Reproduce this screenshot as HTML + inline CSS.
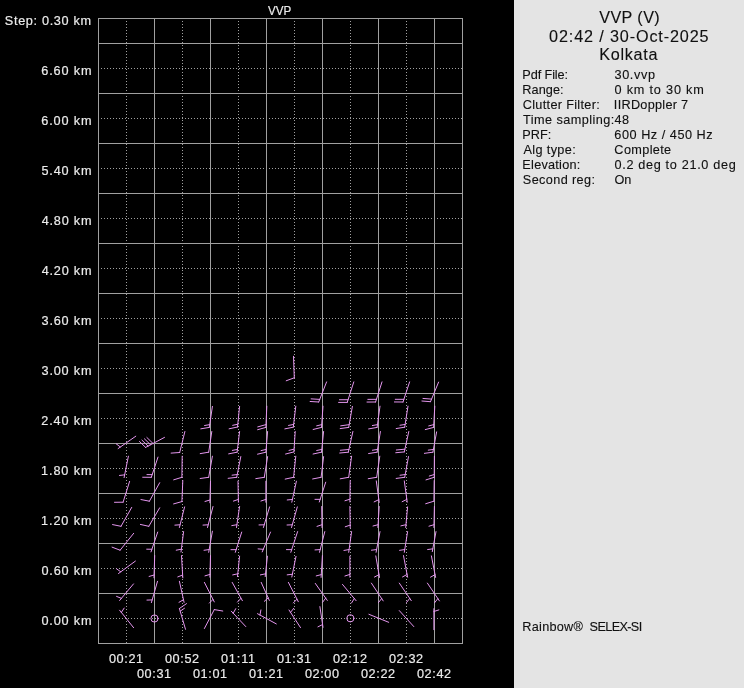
<!DOCTYPE html>
<html><head><meta charset="utf-8"><style>html,body{margin:0;padding:0;background:#000;width:744px;height:688px;overflow:hidden}</style></head>
<body><svg width="744" height="688" viewBox="0 0 744 688" style="display:block"><rect x="0" y="0" width="744" height="688" fill="#000"/><rect x="514" y="0" width="230" height="688" fill="#e4e4e4"/><line x1="98" y1="18.5" x2="463" y2="18.5" stroke="#a0a0a0" stroke-width="1"/><line x1="98" y1="43.5" x2="463" y2="43.5" stroke="#a0a0a0" stroke-width="1"/><line x1="101" y1="68.5" x2="462" y2="68.5" stroke="#a0a0a0" stroke-width="1" stroke-dasharray="1 2"/><line x1="98" y1="93.5" x2="463" y2="93.5" stroke="#a0a0a0" stroke-width="1"/><line x1="101" y1="118.5" x2="462" y2="118.5" stroke="#a0a0a0" stroke-width="1" stroke-dasharray="1 2"/><line x1="98" y1="143.5" x2="463" y2="143.5" stroke="#a0a0a0" stroke-width="1"/><line x1="101" y1="168.5" x2="462" y2="168.5" stroke="#a0a0a0" stroke-width="1" stroke-dasharray="1 2"/><line x1="98" y1="193.5" x2="463" y2="193.5" stroke="#a0a0a0" stroke-width="1"/><line x1="101" y1="218.5" x2="462" y2="218.5" stroke="#a0a0a0" stroke-width="1" stroke-dasharray="1 2"/><line x1="98" y1="243.5" x2="463" y2="243.5" stroke="#a0a0a0" stroke-width="1"/><line x1="101" y1="268.5" x2="462" y2="268.5" stroke="#a0a0a0" stroke-width="1" stroke-dasharray="1 2"/><line x1="98" y1="293.5" x2="463" y2="293.5" stroke="#a0a0a0" stroke-width="1"/><line x1="101" y1="318.5" x2="462" y2="318.5" stroke="#a0a0a0" stroke-width="1" stroke-dasharray="1 2"/><line x1="98" y1="343.5" x2="463" y2="343.5" stroke="#a0a0a0" stroke-width="1"/><line x1="101" y1="368.5" x2="462" y2="368.5" stroke="#a0a0a0" stroke-width="1" stroke-dasharray="1 2"/><line x1="98" y1="393.5" x2="463" y2="393.5" stroke="#a0a0a0" stroke-width="1"/><line x1="101" y1="418.5" x2="462" y2="418.5" stroke="#a0a0a0" stroke-width="1" stroke-dasharray="1 2"/><line x1="98" y1="443.5" x2="463" y2="443.5" stroke="#a0a0a0" stroke-width="1"/><line x1="101" y1="468.5" x2="462" y2="468.5" stroke="#a0a0a0" stroke-width="1" stroke-dasharray="1 2"/><line x1="98" y1="493.5" x2="463" y2="493.5" stroke="#a0a0a0" stroke-width="1"/><line x1="101" y1="518.5" x2="462" y2="518.5" stroke="#a0a0a0" stroke-width="1" stroke-dasharray="1 2"/><line x1="98" y1="543.5" x2="463" y2="543.5" stroke="#a0a0a0" stroke-width="1"/><line x1="101" y1="568.5" x2="462" y2="568.5" stroke="#a0a0a0" stroke-width="1" stroke-dasharray="1 2"/><line x1="98" y1="593.5" x2="463" y2="593.5" stroke="#a0a0a0" stroke-width="1"/><line x1="101" y1="618.5" x2="462" y2="618.5" stroke="#a0a0a0" stroke-width="1" stroke-dasharray="1 2"/><line x1="98" y1="643.5" x2="463" y2="643.5" stroke="#a0a0a0" stroke-width="1"/><line x1="98.5" y1="18" x2="98.5" y2="644" stroke="#a0a0a0" stroke-width="1"/><line x1="126.5" y1="21" x2="126.5" y2="643" stroke="#a0a0a0" stroke-width="1" stroke-dasharray="1 2"/><line x1="154.5" y1="18" x2="154.5" y2="644" stroke="#a0a0a0" stroke-width="1"/><line x1="182.5" y1="21" x2="182.5" y2="643" stroke="#a0a0a0" stroke-width="1" stroke-dasharray="1 2"/><line x1="210.5" y1="18" x2="210.5" y2="644" stroke="#a0a0a0" stroke-width="1"/><line x1="238.5" y1="21" x2="238.5" y2="643" stroke="#a0a0a0" stroke-width="1" stroke-dasharray="1 2"/><line x1="266.5" y1="18" x2="266.5" y2="644" stroke="#a0a0a0" stroke-width="1"/><line x1="294.5" y1="21" x2="294.5" y2="643" stroke="#a0a0a0" stroke-width="1" stroke-dasharray="1 2"/><line x1="322.5" y1="18" x2="322.5" y2="644" stroke="#a0a0a0" stroke-width="1"/><line x1="350.5" y1="21" x2="350.5" y2="643" stroke="#a0a0a0" stroke-width="1" stroke-dasharray="1 2"/><line x1="378.5" y1="18" x2="378.5" y2="644" stroke="#a0a0a0" stroke-width="1"/><line x1="406.5" y1="21" x2="406.5" y2="643" stroke="#a0a0a0" stroke-width="1" stroke-dasharray="1 2"/><line x1="434.5" y1="18" x2="434.5" y2="644" stroke="#a0a0a0" stroke-width="1"/><line x1="462.5" y1="18" x2="462.5" y2="644" stroke="#a0a0a0" stroke-width="1"/><g fill="none" stroke="#e496ee" stroke-width="1" stroke-linecap="round"><path d="M133.6 627.7L119.6 610.2M121.35 612.39l2.86 -4.34"/><path d="M133.5 583.9L119.6 600.5M121.4 598.35l-4.82 -1.94"/><path d="M135.4 561.1L118.5 573.5M120.76 571.84l-4.22 -3.04"/><path d="M133.7 533.3L120.1 550.2M120.1 550.2l-8.04 -3.06"/><path d="M131.7 507.4L121 526.3M121 526.3l-8.43 -1.72"/><path d="M129.6 481.4L123.1 502.2M123.1 502.2l-8.6 0.1"/><path d="M128.4 456.2L124.1 477.6M124.65 474.85l-5.17 0.6"/><path d="M135.8 436.2L118.1 448.6M120.39 446.99l-4.15 -3.13"/><path d="M157.5 581.3L151.4 602.6M152.17 599.91l-5.2 0.18"/><path d="M154.7 555.6L154 577.8M154.09 575l-4.99 1.45"/><path d="M157.7 532.1L151 551.9M151.9 549.25l-5.2 -0.06"/><path d="M159.7 507.8L148.8 526.3M148.8 526.3l-8.4 -1.86"/><path d="M159.7 482.7L149.4 501.2M149.4 501.2l-8.44 -1.66"/><path d="M158 457.1L151.3 477.3M151.3 477.3l-8.6 -0.05M152.18 474.64l-5.2 -0.03"/><path d="M164.5 437.4L145.6 447.4M145.6 447.4l-6.17 -5.99M148.07 446.09l-6.17 -5.99M150.55 444.78l-6.17 -5.99M153.02 443.47l-6.17 -5.99"/><path d="M185.5 629.3L179.4 608.5M179.4 608.5l7.1 -4.85M180.19 611.19l4.29 -2.93"/><path d="M179.4 581.3L184.1 602.4M183.49 599.67l-4.48 2.64"/><path d="M181.5 555.6L182.8 577.8M182.64 575l-4.84 1.89"/><path d="M183.6 531.6L181 552M181.35 549.22l-5.11 0.97"/><path d="M184.6 506.9L179.4 527.5M180.09 524.79l-5.19 0.35"/><path d="M182.8 480.6L181.9 501.6M181.9 501.6l-8.29 2.3"/><path d="M182.2 456.2L181.9 477.3M181.9 477.3l-8.22 2.54"/><path d="M184.9 431.5L179.7 452.5M179.7 452.5l-8.58 0.61"/><path d="M204.4 628.5L214.3 609.6M214.3 609.6l8.48 1.44"/><path d="M204.4 582.4L214.3 601.9M213.03 599.4l-3.68 3.67"/><path d="M210.5 555.6L209.9 577.2M209.98 574.4l-4.99 1.47"/><path d="M212.4 531.2L208.7 552.3M209.18 549.54l-5.15 0.73"/><path d="M213 506.5L207.5 527.5M208.21 524.79l-5.19 0.3"/><path d="M210.5 481.2L209.9 502.8M209.98 500l-4.99 1.47"/><path d="M212.4 456.2L208.7 477.3M208.7 477.3l-8.52 1.2"/><path d="M211.8 431.5L208.7 452.2M208.7 452.2l-8.48 1.42"/><path d="M212.4 406.4L209.3 427.4M209.3 427.4l-8.48 1.43M209.71 424.63l-5.13 0.87"/><path d="M245.8 626.6L231.3 611.2M233.22 613.24l2.5 -4.56"/><path d="M232.2 582.4L242.4 600.7M241.04 598.25l-3.54 3.81"/><path d="M239.6 556.2L237.5 576.6M237.79 573.81l-5.08 1.09"/><path d="M241.7 532.1L235.3 552.3M236.15 549.63l-5.2 0.04"/><path d="M239.6 506.5L236.5 527.5M236.91 524.73l-5.13 0.87"/><path d="M238 481.2L238.4 502.2M238.35 499.4l-4.91 1.7"/><path d="M240.8 456.6L236.7 477.3M236.7 477.3l-8.54 1.02M237.24 474.55l-5.16 0.62"/><path d="M239.6 431.5L237.1 452.2M237.1 452.2l-8.44 1.66M237.44 449.42l-5.1 1"/><path d="M239.6 406.4L237.5 427M237.5 427l-8.41 1.81M237.78 424.21l-5.08 1.1"/><path d="M276.3 623.9L257.5 613.7M259.96 615.04l0.95 -5.11"/><path d="M261.2 582.4L269.3 600.4M268.15 597.85l-3.85 3.49"/><path d="M267.4 556.2L265.2 576.6M265.5 573.82l-5.09 1.07"/><path d="M270.5 532.1L262.2 551.9M263.28 549.32l-5.18 -0.43"/><path d="M269.6 506.9L263.4 527.5M264.21 524.82l-5.2 0.11"/><path d="M265.9 481.2L265.9 502.2M265.9 499.4l-4.95 1.61"/><path d="M267.6 456.6L264.3 477.3M264.3 477.3l-8.5 1.34"/><path d="M267.6 431.5L265.9 452.2M265.9 452.2l-8.37 1.98M266.13 449.41l-5.06 1.2"/><path d="M266.8 406.2L265.9 427.4M265.9 427.4l-8.28 2.31M266.02 424.6l-8.28 2.31"/><path d="M300.5 627.6L289 610M290.53 612.34l3.26 -4.05"/><path d="M288.4 582.4L298.3 601.7M297.02 599.21l-3.67 3.69"/><path d="M296 556.4L291.8 577M292.36 574.26l-5.17 0.59"/><path d="M297.6 531.6L290.8 552.3M291.67 549.64l-5.2 -0.02"/><path d="M297.3 506.9L291.5 527.5M292.26 524.8l-5.2 0.21"/><path d="M296.4 481.2L291.8 502.2M292.4 499.46l-5.17 0.51"/><path d="M295.8 456.2L293.6 477.3M293.6 477.3l-8.41 1.8"/><path d="M295.2 431.5L293.9 451.9M293.9 451.9l-8.33 2.13M294.08 449.11l-5.04 1.29"/><path d="M295.8 406.2L293.3 427.2M293.3 427.2l-8.44 1.67M293.63 424.42l-5.1 1.01"/><path d="M293.5 356.3L294.3 377.8M294.3 377.8l-8.07 2.96"/><path d="M319.9 606.6L323 627.3M322.59 624.53l-4.65 2.32"/><path d="M315.3 583.4L327.3 600.4M325.69 598.11l-3.11 4.16"/><path d="M322.4 555.6L321.1 577.4M321.27 574.6l-5.03 1.31"/><path d="M324.8 531.6L319.5 552.3M320.19 549.59l-5.19 0.33"/><path d="M321.7 506.5L322 527.5M321.96 524.7l-4.92 1.68"/><path d="M325.7 482.2L319.3 502M320.16 499.34l-5.2 0.01"/><path d="M323.6 456.6L321.1 477.3M321.1 477.3l-8.44 1.66"/><path d="M323.6 431.5L321.5 452.2M321.5 452.2l-8.41 1.82M321.78 449.41l-5.08 1.1"/><path d="M323 406.2L321.5 427.4M321.5 427.4l-8.35 2.07M321.7 424.61l-5.05 1.25"/><path d="M326.6 381.9L318.7 402M318.7 402l-8.58 -0.52M319.72 399.39l-8.58 -0.52"/><path d="M342.5 584.4L356.1 600.7M354.31 598.55l-2.77 4.4"/><path d="M349.9 556.2L349.9 577.2M349.9 574.4l-4.95 1.61"/><path d="M351.6 531.6L348.7 552.3M349.09 549.53l-5.12 0.91"/><path d="M349.9 506.5L350.2 527.9M350.16 525.1l-4.92 1.68"/><path d="M350.2 480.6L349.9 502M349.94 499.2l-4.97 1.54"/><path d="M351.6 456.2L348.7 477.3M348.7 477.3l-8.46 1.52"/><path d="M352.9 431.5L348.3 452.2M348.3 452.2l-8.56 0.82M348.91 449.47l-8.56 0.82"/><path d="M352.4 406.4L348.7 427.4M348.7 427.4l-8.52 1.2M349.19 424.64l-8.52 1.2"/><path d="M353.8 381.9L347.2 402.4M347.2 402.4l-8.6 0.02M348.06 399.73l-8.6 0.02"/><path d="M388.7 622.3L368.9 614.3"/><path d="M371.4 583.1L383.2 600.9M381.65 598.57l-3.23 4.07"/><path d="M375.8 555.9L379.5 577.4M379.03 574.64l-4.6 2.42"/><path d="M380 531.6L376.1 552.3M376.62 549.55l-5.16 0.66"/><path d="M379.2 506.5L377.9 527.5M378.07 524.71l-5.04 1.3"/><path d="M376.3 480.9L379.2 502.4M378.83 499.63l-4.69 2.25"/><path d="M379.8 456.2L376.7 477.3M376.7 477.3l-8.48 1.44"/><path d="M380.4 431.5L377.1 452.2M377.1 452.2l-8.5 1.34M377.54 449.43l-5.14 0.81"/><path d="M380 406.2L377.1 427.4M377.1 427.4l-8.46 1.52M377.48 424.63l-5.12 0.92"/><path d="M382 381.9L375.6 402M375.6 402l-8.6 0.05M376.45 399.33l-8.6 0.05"/><path d="M413.8 626.6L399.3 610.6"/><path d="M399.3 583.1L411.3 600.7M409.72 598.39l-3.18 4.11"/><path d="M403.5 555.6L407.6 577.2M407.08 574.45l-4.56 2.5"/><path d="M407.6 531.6L404.3 552.3M404.74 549.53l-5.14 0.81"/><path d="M407.6 506.9L405.7 527.5M405.96 524.71l-5.07 1.15"/><path d="M404.3 480.9L407.2 502.2M406.82 499.43l-4.68 2.26"/><path d="M408.5 456.6L404.7 477.3M404.7 477.3l-8.52 1.14M405.21 474.55l-5.15 0.69"/><path d="M408.8 431.5L404.3 451.9M404.3 451.9l-8.56 0.83M404.9 449.17l-8.56 0.83"/><path d="M408 406.2L404.7 427.2M404.7 427.2l-8.49 1.36M405.13 424.43l-5.13 0.82"/><path d="M409.6 381.9L403 402M403 402l-8.6 -0.03M403.87 399.34l-8.6 -0.03"/><path d="M433.9 629.7L433.9 608.7M433.9 611.5l4.95 -1.61"/><path d="M427.4 583.1L439.4 600.9M437.83 598.58l-3.2 4.1"/><path d="M431.4 555.9L435.6 577.4M435.06 574.65l-4.55 2.53"/><path d="M436 531.6L432.3 551.6M432.81 548.85l-5.16 0.68"/><path d="M434.4 506.5L433.9 527.5M433.97 524.7l-4.98 1.49"/><path d="M434.2 480.6L433.9 501.2M433.9 501.2l-8.22 2.54"/><path d="M434.4 456.2L434.2 477.3M434.2 477.3l-8.2 2.58M434.23 474.5l-4.96 1.56"/><path d="M436.6 431.9L432.9 452.2M432.9 452.2l-8.52 1.15M433.4 449.45l-5.15 0.69"/><path d="M434.8 406.2L433.6 427.4M433.6 427.4l-8.32 2.19M433.76 424.6l-5.03 1.32"/><path d="M438.6 382.1L430.5 401.7M430.5 401.7l-8.57 -0.67M431.57 399.11l-8.57 -0.67"/><circle cx="154.5" cy="618.5" r="3.6"/><circle cx="350.4" cy="618.3" r="3.6"/></g><g font-family="Liberation Sans, sans-serif"><text x="268.04" y="15" font-size="12.7" fill="#ececec" stroke="#ececec" stroke-width="0.18" style="will-change:transform" textLength="23.23" lengthAdjust="spacingAndGlyphs">VVP</text><text x="4.82" y="25" font-size="12.7" fill="#ececec" stroke="#ececec" stroke-width="0.18" style="will-change:transform" textLength="86.21" lengthAdjust="spacing">Step: 0.30 km</text><text x="41.36" y="75" font-size="12.7" fill="#ececec" stroke="#ececec" stroke-width="0.18" style="will-change:transform" textLength="50.18" lengthAdjust="spacing">6.60 km</text><text x="41.36" y="125" font-size="12.7" fill="#ececec" stroke="#ececec" stroke-width="0.18" style="will-change:transform" textLength="50.18" lengthAdjust="spacing">6.00 km</text><text x="41.49" y="175" font-size="12.7" fill="#ececec" stroke="#ececec" stroke-width="0.18" style="will-change:transform" textLength="50.05" lengthAdjust="spacing">5.40 km</text><text x="41.71" y="225" font-size="12.7" fill="#ececec" stroke="#ececec" stroke-width="0.18" style="will-change:transform" textLength="49.83" lengthAdjust="spacing">4.80 km</text><text x="41.71" y="275" font-size="12.7" fill="#ececec" stroke="#ececec" stroke-width="0.18" style="will-change:transform" textLength="49.83" lengthAdjust="spacing">4.20 km</text><text x="41.52" y="325" font-size="12.7" fill="#ececec" stroke="#ececec" stroke-width="0.18" style="will-change:transform" textLength="50.02" lengthAdjust="spacing">3.60 km</text><text x="41.52" y="375" font-size="12.7" fill="#ececec" stroke="#ececec" stroke-width="0.18" style="will-change:transform" textLength="50.02" lengthAdjust="spacing">3.00 km</text><text x="41.36" y="425" font-size="12.7" fill="#ececec" stroke="#ececec" stroke-width="0.18" style="will-change:transform" textLength="50.18" lengthAdjust="spacing">2.40 km</text><text x="41.03" y="475" font-size="12.7" fill="#ececec" stroke="#ececec" stroke-width="0.18" style="will-change:transform" textLength="50.50" lengthAdjust="spacing">1.80 km</text><text x="41.03" y="525" font-size="12.7" fill="#ececec" stroke="#ececec" stroke-width="0.18" style="will-change:transform" textLength="50.50" lengthAdjust="spacing">1.20 km</text><text x="41.50" y="575" font-size="12.7" fill="#ececec" stroke="#ececec" stroke-width="0.18" style="will-change:transform" textLength="50.03" lengthAdjust="spacing">0.60 km</text><text x="41.50" y="625" font-size="12.7" fill="#ececec" stroke="#ececec" stroke-width="0.18" style="will-change:transform" textLength="50.03" lengthAdjust="spacing">0.00 km</text><text x="108.95" y="663" font-size="12.7" fill="#ececec" stroke="#ececec" stroke-width="0.18" style="will-change:transform" textLength="34.22" lengthAdjust="spacing">00:21</text><text x="136.95" y="678" font-size="12.7" fill="#ececec" stroke="#ececec" stroke-width="0.18" style="will-change:transform" textLength="34.22" lengthAdjust="spacing">00:31</text><text x="164.95" y="663" font-size="12.7" fill="#ececec" stroke="#ececec" stroke-width="0.18" style="will-change:transform" textLength="34.23" lengthAdjust="spacing">00:52</text><text x="192.95" y="678" font-size="12.7" fill="#ececec" stroke="#ececec" stroke-width="0.18" style="will-change:transform" textLength="34.22" lengthAdjust="spacing">01:01</text><text x="220.95" y="663" font-size="12.7" fill="#ececec" stroke="#ececec" stroke-width="0.18" style="will-change:transform" textLength="34.22" lengthAdjust="spacing">01:11</text><text x="248.95" y="678" font-size="12.7" fill="#ececec" stroke="#ececec" stroke-width="0.18" style="will-change:transform" textLength="34.22" lengthAdjust="spacing">01:21</text><text x="276.95" y="663" font-size="12.7" fill="#ececec" stroke="#ececec" stroke-width="0.18" style="will-change:transform" textLength="34.22" lengthAdjust="spacing">01:31</text><text x="304.95" y="678" font-size="12.7" fill="#ececec" stroke="#ececec" stroke-width="0.18" style="will-change:transform" textLength="34.09" lengthAdjust="spacing">02:00</text><text x="332.95" y="663" font-size="12.7" fill="#ececec" stroke="#ececec" stroke-width="0.18" style="will-change:transform" textLength="34.23" lengthAdjust="spacing">02:12</text><text x="360.95" y="678" font-size="12.7" fill="#ececec" stroke="#ececec" stroke-width="0.18" style="will-change:transform" textLength="34.23" lengthAdjust="spacing">02:22</text><text x="388.95" y="663" font-size="12.7" fill="#ececec" stroke="#ececec" stroke-width="0.18" style="will-change:transform" textLength="34.23" lengthAdjust="spacing">02:32</text><text x="416.95" y="678" font-size="12.7" fill="#ececec" stroke="#ececec" stroke-width="0.18" style="will-change:transform" textLength="34.23" lengthAdjust="spacing">02:42</text><text x="599.23" y="23" font-size="16.2" fill="#101010" stroke="#101010" stroke-width="0.12" style="will-change:transform" textLength="60.48" lengthAdjust="spacing">VVP (V)</text><text x="549.07" y="42" font-size="16.2" fill="#101010" stroke="#101010" stroke-width="0.12" style="will-change:transform" textLength="159.51" lengthAdjust="spacing">02:42 / 30-Oct-2025</text><text x="599.17" y="60" font-size="16.2" fill="#101010" stroke="#101010" stroke-width="0.12" style="will-change:transform" textLength="58.33" lengthAdjust="spacing">Kolkata</text><text x="522.36" y="79" font-size="12.7" fill="#101010" stroke="#101010" stroke-width="0.12" style="will-change:transform" textLength="45.70" lengthAdjust="spacing">Pdf File:</text><text x="614.52" y="79" font-size="12.7" fill="#101010" stroke="#101010" stroke-width="0.12" style="will-change:transform" textLength="40.42" lengthAdjust="spacing">30.vvp</text><text x="522.36" y="94" font-size="12.7" fill="#101010" stroke="#101010" stroke-width="0.12" style="will-change:transform" textLength="41.20" lengthAdjust="spacing">Range:</text><text x="614.50" y="94" font-size="12.7" fill="#101010" stroke="#101010" stroke-width="0.12" style="will-change:transform" textLength="89.33" lengthAdjust="spacing">0 km to 30 km</text><text x="522.76" y="109" font-size="12.7" fill="#101010" stroke="#101010" stroke-width="0.12" style="will-change:transform" textLength="77.00" lengthAdjust="spacing">Clutter Filter:</text><text x="613.83" y="109" font-size="12.7" fill="#101010" stroke="#101010" stroke-width="0.12" style="will-change:transform" textLength="74.31" lengthAdjust="spacing">IIRDoppler 7</text><text x="523.11" y="124" font-size="12.7" fill="#101010" stroke="#101010" stroke-width="0.12" style="will-change:transform" textLength="106.04" lengthAdjust="spacing">Time sampling:48</text><text x="522.36" y="139" font-size="12.7" fill="#101010" stroke="#101010" stroke-width="0.12" style="will-change:transform">PRF:</text><text x="614.36" y="139" font-size="12.7" fill="#101010" stroke="#101010" stroke-width="0.12" style="will-change:transform" textLength="98.28" lengthAdjust="spacing">600 Hz / 450 Hz</text><text x="523.38" y="154" font-size="12.7" fill="#101010" stroke="#101010" stroke-width="0.12" style="will-change:transform" textLength="52.38" lengthAdjust="spacing">Alg type:</text><text x="614.36" y="154" font-size="12.7" fill="#101010" stroke="#101010" stroke-width="0.12" style="will-change:transform" textLength="56.81" lengthAdjust="spacing">Complete</text><text x="522.36" y="169" font-size="12.7" fill="#101010" stroke="#101010" stroke-width="0.12" style="will-change:transform" textLength="57.90" lengthAdjust="spacing">Elevation:</text><text x="614.50" y="169" font-size="12.7" fill="#101010" stroke="#101010" stroke-width="0.12" style="will-change:transform" textLength="121.21" lengthAdjust="spacing">0.2 deg to 21.0 deg</text><text x="522.82" y="184" font-size="12.7" fill="#101010" stroke="#101010" stroke-width="0.12" style="will-change:transform" textLength="72.14" lengthAdjust="spacing">Second reg:</text><text x="614.40" y="184" font-size="12.7" fill="#101010" stroke="#101010" stroke-width="0.12" style="will-change:transform">On</text><text x="522.36" y="631" font-size="12.7" fill="#101010" stroke="#101010" stroke-width="0.12" style="will-change:transform" textLength="60.54" lengthAdjust="spacing">Rainbow®</text><text x="589.62" y="631" font-size="12.7" fill="#101010" stroke="#101010" stroke-width="0.12" style="will-change:transform" textLength="52.55" lengthAdjust="spacing">SELEX-SI</text></g></svg></body></html>
